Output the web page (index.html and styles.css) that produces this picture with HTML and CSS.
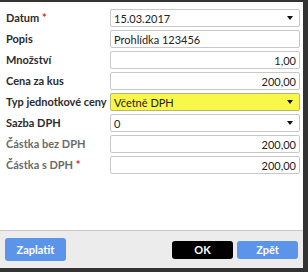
FILE: index.html
```html
<!DOCTYPE html>
<html lang="cs">
<head>
    <meta charset="UTF-8">
    <title>Platba</title>
    <link rel="stylesheet" href="styles.css">
</head>
<body>
    <div class="dialog">
        <div class="form">
            <label class="label">Datum <span class="req">*</span></label>
            <div class="field select"><span>15.03.2017</span><i class="caret"></i></div>

            <label class="label">Popis</label>
            <div class="field"><span>Prohlídka 123456</span></div>

            <label class="label">Množství</label>
            <div class="field num"><span>1,00</span></div>

            <label class="label">Cena za kus</label>
            <div class="field num"><span>200,00</span></div>

            <label class="label">Typ jednotkové ceny</label>
            <div class="field select hilite"><span>Včetně DPH</span><i class="caret"></i></div>

            <label class="label">Sazba DPH</label>
            <div class="field select"><span>0</span><i class="caret"></i></div>

            <label class="label muted">Částka bez DPH</label>
            <div class="field num"><span>200,00</span></div>

            <label class="label muted">Částka s DPH <span class="req">*</span></label>
            <div class="field num"><span>200,00</span></div>
        </div>

        <div class="footer">
            <button class="btn btn-blue btn-big">Zaplatit</button>
            <div class="spacer"></div>
            <button class="btn btn-black">OK</button>
            <button class="btn btn-blue">Zpět</button>
        </div>
    </div>
</body>
</html>
```

FILE: styles.css
```css
:root {
    --frame: #333333;
    --blue: #5b94e8;
    --font: Lato, 'Open Sans', sans-serif;
}

body {
    margin: 0;
    background: var(--frame);
    font-family: var(--font);
    width: 308px;
    height: 272px;
    overflow: hidden;
}

.dialog {
    margin-top: 2px;
    width: 303px;
    height: 266px;
    background: #fff;
    display: flex;
    flex-direction: column;
}

.form {
    flex: 1;
    display: grid;
    grid-template-columns: 110px 190px;
    grid-auto-rows: 18px;
    row-gap: 3px;
    padding-top: 7px;
    align-content: start;
}

.label {
    padding-left: 6px;
    font-size: 11px;
    font-weight: 700;
    color: #2b2b2b;
    line-height: 18px;
    white-space: nowrap;
}

.label.muted {
    color: #6a6a6a;
}

.req {
    color: #d9262b;
}

.field {
    box-sizing: border-box;
    border: 1px solid #c8c8c8;
    border-radius: 2px;
    background: #fff;
    display: flex;
    align-items: center;
    padding: 0 3px;
    font-size: 11px;
    color: #222;
}

.field span {
    flex: 1;
}

.field.num span {
    text-align: right;
}

.field.hilite {
    background: #f9f74a;
    border-color: #b9b76a;
}

.caret {
    width: 0;
    height: 0;
    border-left: 3px solid transparent;
    border-right: 3px solid transparent;
    border-top: 4px solid #111;
    margin-right: 3px;
}

.footer {
    height: 37px;
    border-top: 1px solid #c9c9c9;
    background: #ececec;
    display: flex;
    align-items: center;
    padding: 0 5px;
    gap: 4px;
}

.spacer {
    flex: 1;
}

.btn {
    border: none;
    border-radius: 3px;
    height: 18px;
    width: 61px;
    color: #fff;
    font-family: var(--font);
    font-size: 11px;
    font-weight: 700;
    padding: 0;
}

.btn-big {
    height: 23px;
}

.btn-blue {
    background: var(--blue);
}

.btn-black {
    background: #000;
}
```
